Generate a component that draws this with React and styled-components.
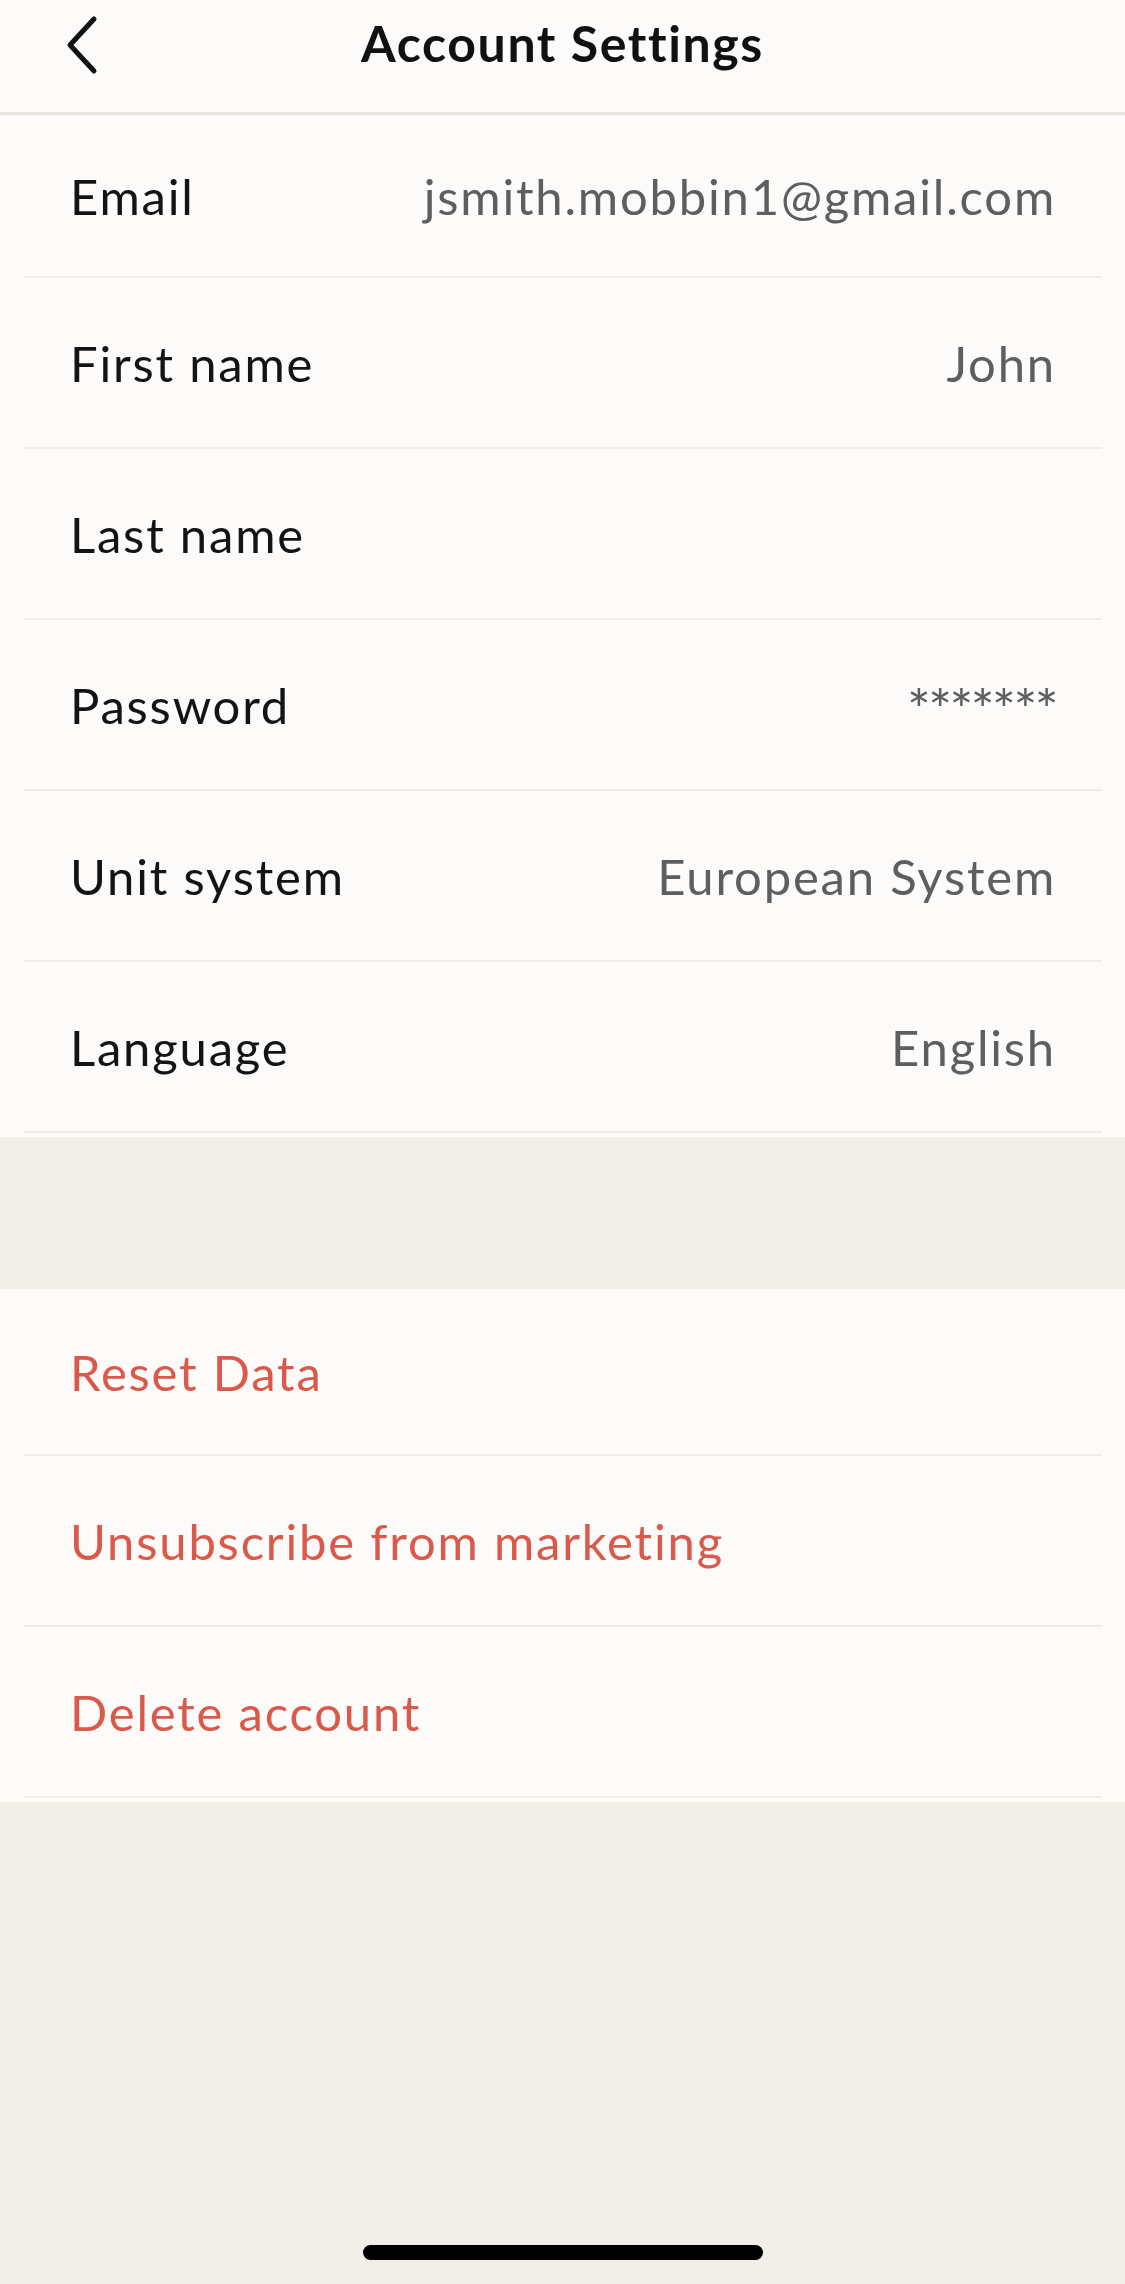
import styled, { createGlobalStyle } from "styled-components";

const GlobalStyle = createGlobalStyle`
  * {
    box-sizing: border-box;
  }

  body {
    margin: 0;
    background: #f2efe9;
    font-family: Lato, "Open Sans", sans-serif;
    -webkit-font-smoothing: antialiased;
  }
`;

const accountRows = [
  { label: "Email", value: "jsmith.mobbin1@gmail.com" },
  { label: "First name", value: "John" },
  { label: "Last name", value: "" },
  { label: "Password", value: "*******" },
  { label: "Unit system", value: "European System" },
  { label: "Language", value: "English" },
];

const dangerRows = ["Reset Data", "Unsubscribe from marketing", "Delete account"];

function BackIcon() {
  return (
    <svg width="36" height="60" viewBox="0 0 36 60" fill="none">
      <path
        d="M30 8 L6 34 L30 60"
        transform="translate(0 -4)"
        stroke="#111"
        strokeWidth="5"
        strokeLinecap="round"
        strokeLinejoin="round"
      />
    </svg>
  );
}

function App() {
  return (
    <Page>
      <GlobalStyle />
      <Header>
        <BackButton aria-label="Back">
          <BackIcon />
        </BackButton>
        <Title>Account Settings</Title>
        <span />
      </Header>

      <Section>
        {accountRows.map((row, i) => (
          <Row key={row.label} $height={i === 0 ? 163 : 171}>
            <Label>{row.label}</Label>
            <Value $masked={row.label === "Password"}>{row.value}</Value>
          </Row>
        ))}
      </Section>

      <Gap />

      <Section>
        {dangerRows.map((label, i) => (
          <Row key={label} $height={i === 0 ? 167 : 171}>
            <Label $danger>{label}</Label>
          </Row>
        ))}
      </Section>

      <Footer>
        <HomeIndicator />
      </Footer>
    </Page>
  );
}

export default App;

const Page = styled.div`
  min-height: 100vh;
  display: flex;
  flex-direction: column;
  background: #f2efe9;
`;

const Header = styled.header`
  height: 115px;
  display: grid;
  grid-template-columns: 1fr auto 1fr;
  align-items: start;
  padding-top: 18px;
  background: #fcfbf9;
  border-bottom: 3px solid #e9e5dd;
`;

const BackButton = styled.button`
  justify-self: start;
  margin: -3px 0 0 64px;
  padding: 0;
  border: none;
  background: none;
  display: flex;
  cursor: pointer;
`;

const Title = styled.h1`
  margin: 0;
  font-size: 50px;
  line-height: 50px;
  font-weight: 700;
  color: #111;
  letter-spacing: 1.6px;
`;

const Section = styled.section`
  background: #fcfbf9;
  padding: 0 23px 4px 24px;
`;

const Row = styled.div`
  height: ${(p) => p.$height}px;
  display: flex;
  align-items: center;
  justify-content: space-between;
  padding: 0 46px 0 46px;
  border-bottom: 2px solid #efedea;
`;

const Label = styled.span`
  font-size: 49px;
  line-height: 60px;
  font-weight: 400;
  letter-spacing: 1.8px;
  color: ${(p) => (p.$danger ? "#d95a4b" : "#141414")};
`;

const Value = styled.span`
  font-size: ${(p) => (p.$masked ? "56px" : "49px")};
  line-height: 60px;
  letter-spacing: ${(p) => (p.$masked ? "-2.5px" : "1.8px")};
  margin-top: ${(p) => (p.$masked ? "8px" : "0")};
  color: #5e5e5e;
`;

const Gap = styled.div`
  height: 152px;
`;

const Footer = styled.div`
  flex: 1;
  display: flex;
  align-items: flex-end;
  justify-content: center;
  padding-bottom: 24px;
`;

const HomeIndicator = styled.div`
  width: 400px;
  height: 15px;
  border-radius: 8px;
  background: #000;
`;
